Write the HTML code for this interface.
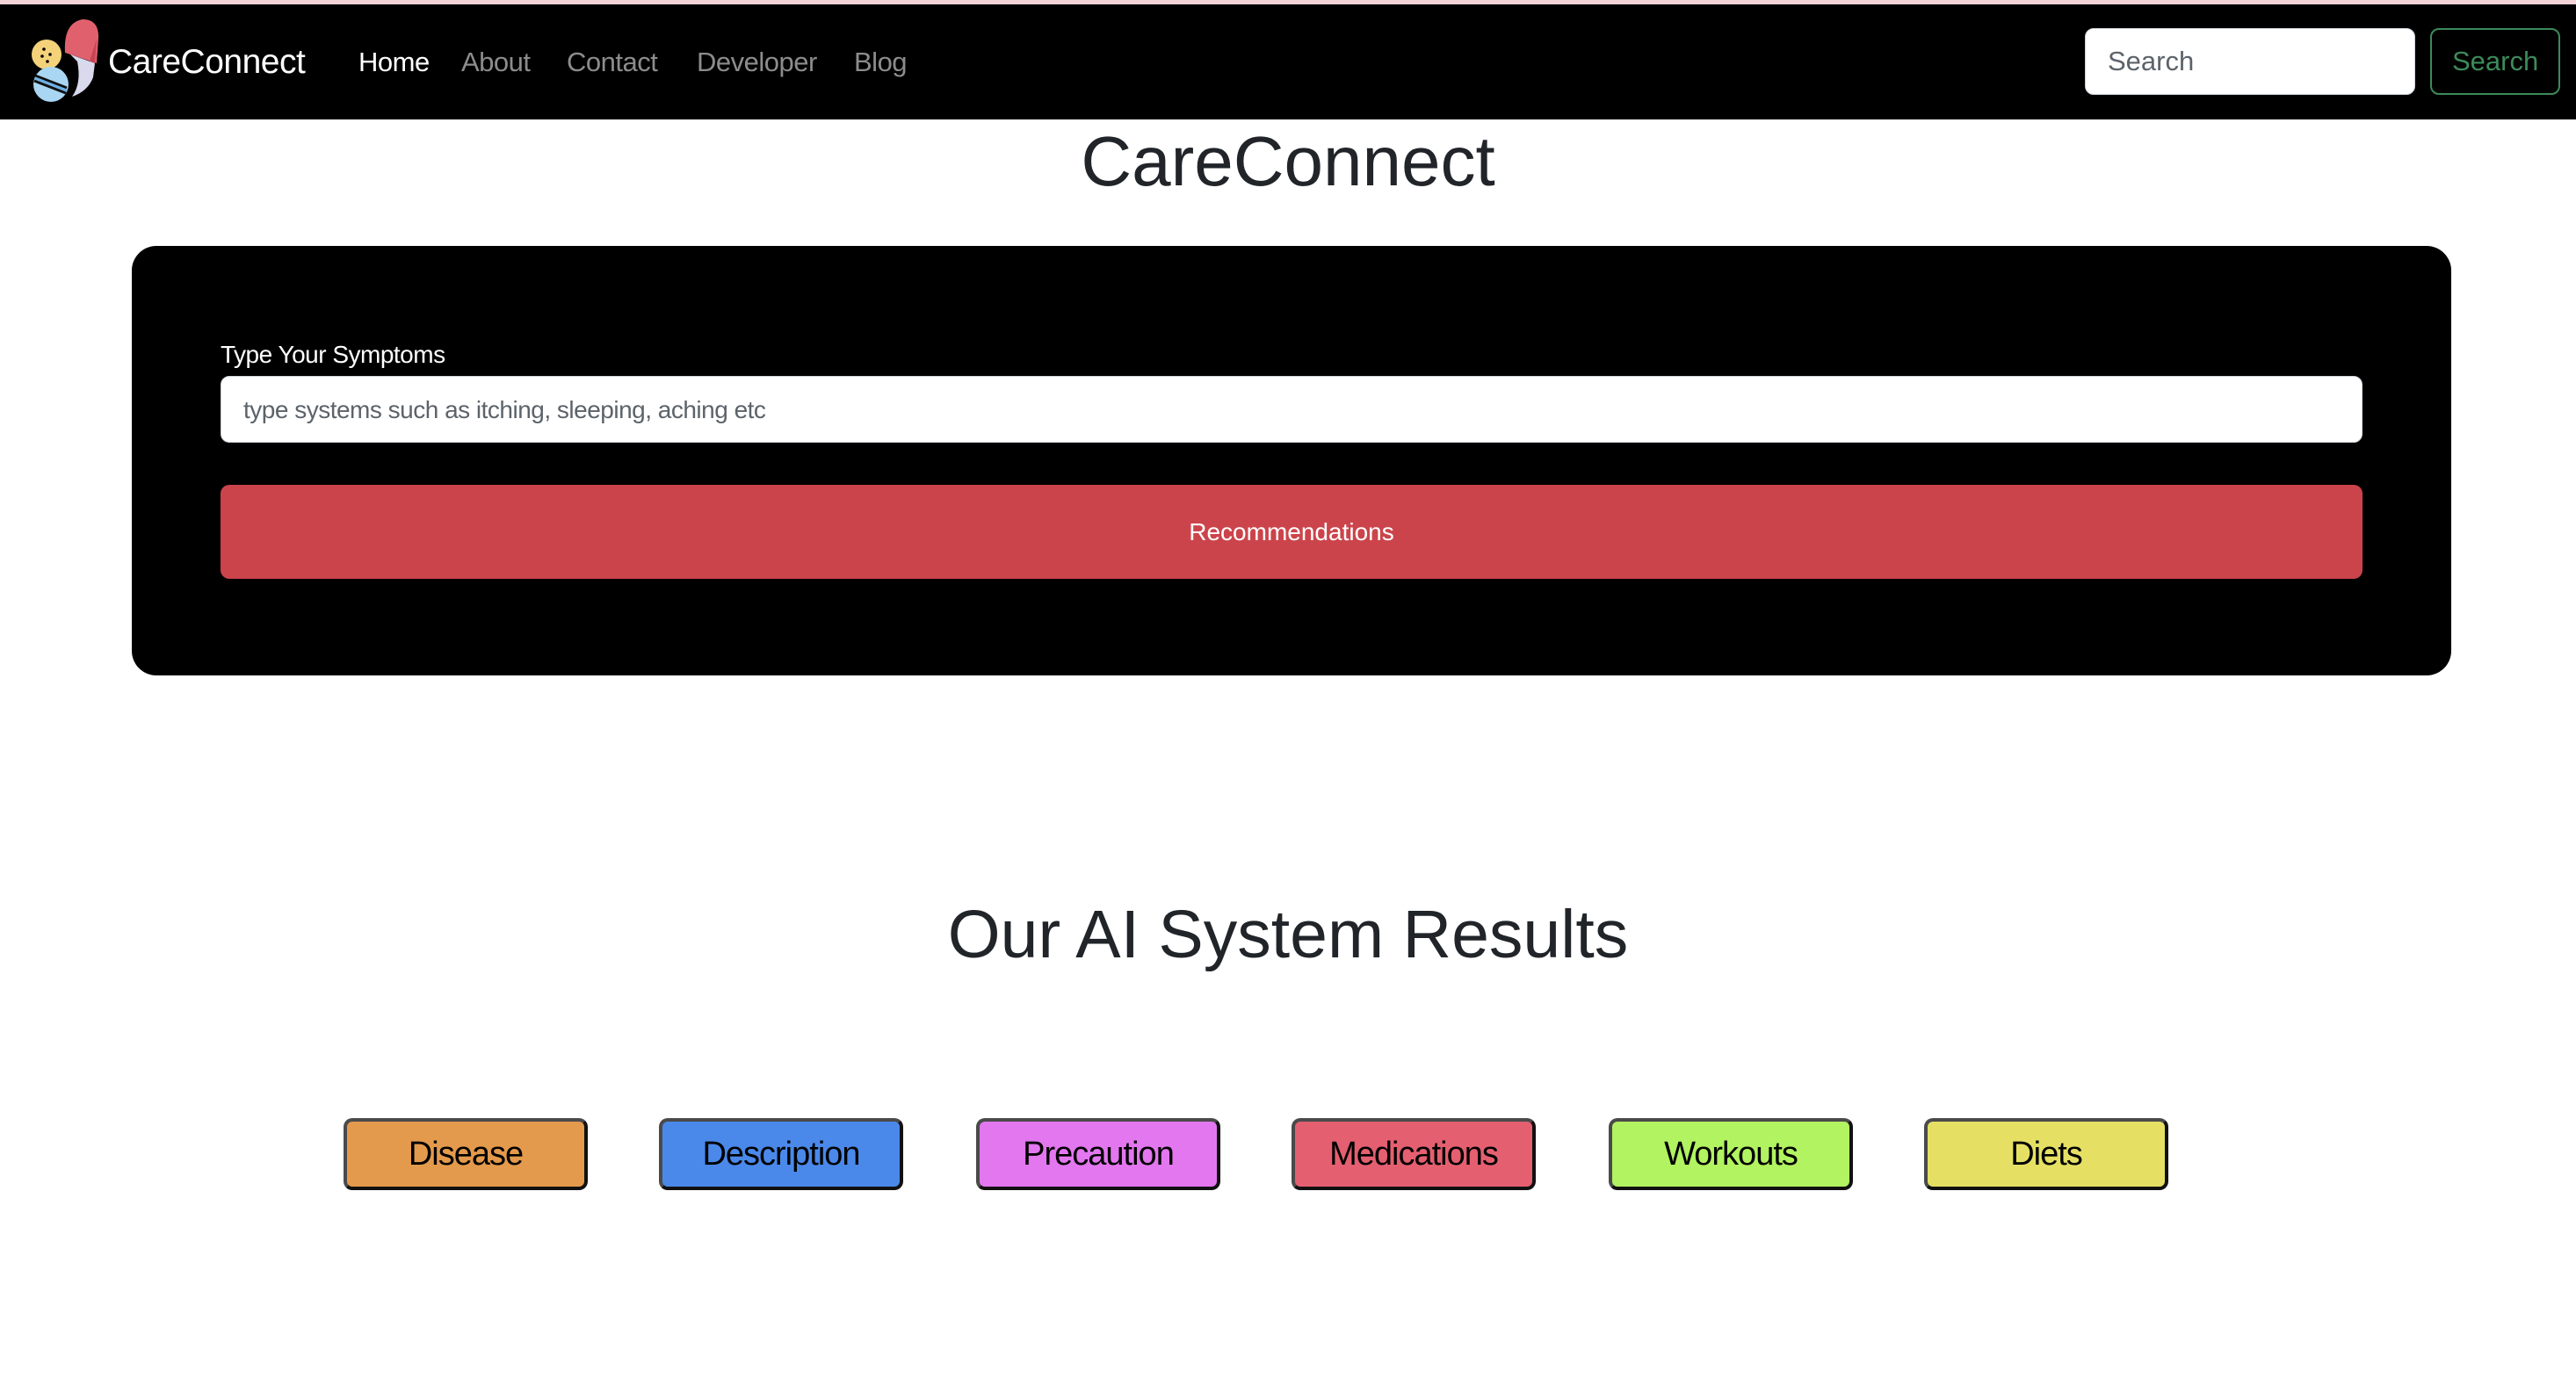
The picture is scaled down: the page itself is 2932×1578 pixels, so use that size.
<!DOCTYPE html>
<html><head><meta charset="utf-8"><style>
*{box-sizing:border-box;margin:0;padding:0}
body{width:2932px;height:1578px;background:#fff;font-family:"Liberation Sans",sans-serif;position:relative;overflow:hidden;color:#212529}
.a{position:absolute}
.top{left:0;top:0;width:2932px;height:5px;background:#f3d4d8}
.nav{left:0;top:5px;width:2932px;height:131px;background:#000}
.t{white-space:nowrap;line-height:1}
.btn{position:absolute;top:1273px;width:278px;height:82px;border:4px solid #111;border-top-color:#4a4a4a;border-left-color:#4a4a4a;border-radius:10px;display:flex;align-items:center;justify-content:center;font-size:38px;color:#000;letter-spacing:-1px}
</style></head><body>
<div class="a top"></div>
<div class="a nav"></div>
<svg class="a" style="left:0;top:0" width="130" height="136" viewBox="0 0 130 136">
<path d="M74 60 Q72 26 94 22 Q113 22 112 44 L110 72 Z" fill="#e0616d"/>
<path d="M110 44 L108 72 L102 70 Z" fill="#c94452"/>
<path d="M80 62 L108 72 L106 88 Q100 104 82 110 Q93 95 88 70 Z" fill="#d9d9ee"/>
<circle cx="53" cy="62" r="17" fill="#f4d27a"/>
<circle cx="50" cy="56" r="1.8" fill="#000"/><circle cx="57" cy="62" r="1.8" fill="#000"/><circle cx="48" cy="64" r="1.8" fill="#000"/><circle cx="54" cy="70" r="1.8" fill="#000"/>
<circle cx="58" cy="96" r="20" fill="#a9d6f2"/>
<path d="M40 86 L76 100 M39 92 L75 106" stroke="#111" stroke-width="3"/>
<path d="M40 89 L76 103" stroke="#6bb0e8" stroke-width="3"/>
</svg>
<div class="a t" style="left:123px;top:51px;font-size:39px;color:#fff;letter-spacing:-0.5px">CareConnect</div>
<div class="a t" style="left:408px;top:55px;font-size:31px;color:#fff;letter-spacing:-0.5px">Home</div>
<div class="a t" style="left:525px;top:55px;font-size:31px;color:#8c8c8c;letter-spacing:-0.5px">About</div>
<div class="a t" style="left:645px;top:55px;font-size:31px;color:#8c8c8c;letter-spacing:-0.5px">Contact</div>
<div class="a t" style="left:793px;top:55px;font-size:31px;color:#8c8c8c;letter-spacing:-0.5px">Developer</div>
<div class="a t" style="left:972px;top:55px;font-size:31px;color:#8c8c8c;letter-spacing:-0.5px">Blog</div>
<div class="a" style="left:2373px;top:32px;width:376px;height:76px;background:#fff;border:1px solid #ced4da;border-radius:10px"></div>
<div class="a t" style="left:2399px;top:54px;font-size:31px;color:#5c636a">Search</div>
<div class="a" style="left:2766px;top:32px;width:148px;height:76px;border:2px solid #3d8a5a;border-radius:10px"></div>
<div class="a t" style="left:2791px;top:54px;font-size:31px;color:#3d8a5a">Search</div>
<div class="a t" style="left:0;width:2932px;text-align:center;top:144px;font-size:80px;color:#212529">CareConnect</div>
<div class="a" style="left:150px;top:280px;width:2640px;height:489px;background:#000;border-radius:28px"></div>
<div class="a t" style="left:251px;top:390px;font-size:28px;color:#fff;letter-spacing:-0.5px">Type Your Symptoms</div>
<div class="a" style="left:251px;top:428px;width:2438px;height:76px;background:#fff;border:1px solid #ced4da;border-radius:10px"></div>
<div class="a t" style="left:277px;top:453px;font-size:28px;color:#5c636a;letter-spacing:-0.5px">type systems such as itching, sleeping, aching etc</div>
<div class="a" style="left:251px;top:552px;width:2438px;height:107px;background:#cc444b;border-radius:10px;display:flex;align-items:center;justify-content:center;color:#fff;font-size:28px">Recommendations</div>
<div class="a t" style="left:0;width:2932px;text-align:center;top:1026px;font-size:77px;color:#212529">Our AI System Results</div>
<div class="btn" style="left:391px;background:#e49a4c">Disease</div>
<div class="btn" style="left:750px;background:#4a89ea">Description</div>
<div class="btn" style="left:1111px;background:#e377ef">Precaution</div>
<div class="btn" style="left:1470px;background:#e45f70">Medications</div>
<div class="btn" style="left:1831px;background:#b1f360">Workouts</div>
<div class="btn" style="left:2190px;background:#e5e064">Diets</div>
</body></html>
